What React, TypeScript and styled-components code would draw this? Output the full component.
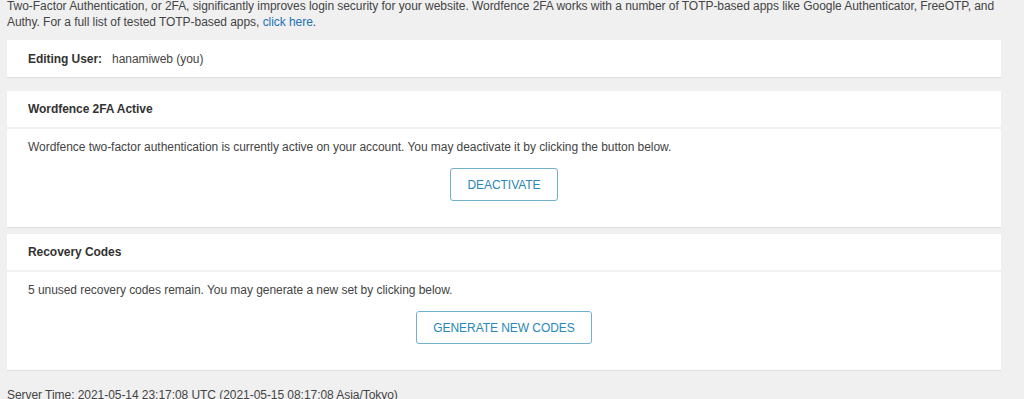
import React from "react";
import styled, { createGlobalStyle } from "styled-components";

const Global = createGlobalStyle`
  html, body { margin: 0; padding: 0; background: #f0f0f1; }
  body { font-family: "Liberation Sans", Arial, sans-serif; font-size: 12px; letter-spacing: -0.05px; color: #444; }
`;

const Page = styled.div`
  padding: 0 23px 0 7px;
  margin-top: -2px;
`;

const Intro = styled.p`
  margin: 0 -23px 10px 0;
  line-height: 16px;
  color: #444;
`;

const Link = styled.a`
  color: #2271b1;
  text-decoration: none;
`;

const Card = styled.section<{ $gap?: number }>`
  background: #fff;
  box-shadow: 0 1px 1px rgba(0, 0, 0, 0.06);
  margin-bottom: ${(p) => p.$gap ?? 8}px;
`;

const UserRow = styled.div`
  display: flex;
  align-items: center;
  height: 37px;
  padding: 0 21px;
  gap: 10px;
`;

const Label = styled.span`
  font-weight: bold;
  color: #333;
`;

const Header = styled.div`
  display: flex;
  align-items: center;
  height: 36px;
  padding: 0 21px;
  font-weight: bold;
  color: #333;
  border-bottom: 2px solid #f1f1f1;
`;

const Body = styled.div<{ $bottom: number }>`
  padding: 10px 21px ${(p) => p.$bottom}px;
  display: flex;
  flex-direction: column;
`;

const BodyText = styled.div`
  line-height: 16px;
`;

const ButtonRow = styled.div`
  display: flex;
  justify-content: center;
  margin-top: 13px;
`;

const OutlineButton = styled.button<{ $w: number }>`
  font-family: "Liberation Sans", Arial, sans-serif;
  font-size: 12px;
  letter-spacing: -0.05px;
  text-transform: uppercase;
  color: #2a87b7;
  background: #fff;
  border: 1px solid #72b0d0;
  border-radius: 3px;
  height: 33px;
  width: ${(p) => p.$w}px;
  padding: 0;
  white-space: nowrap;
  cursor: pointer;
`;

const Footer = styled.p`
  margin: 17px 0 0;
  line-height: 16px;
`;

export default function App() {
  return (
    <>
      <Global />
      <Page>
        <Intro>
          Two-Factor Authentication, or 2FA, significantly improves login security for your website. Wordfence 2FA works with a number of TOTP-based apps like Google Authenticator, FreeOTP, and Authy. For a full list of tested TOTP-based apps, <Link href="#">click here</Link>.
        </Intro>
        <Card $gap={14}>
          <UserRow>
            <Label>Editing User:</Label>
            <span>hanamiweb (you)</span>
          </UserRow>
        </Card>
        <Card $gap={7}>
          <Header>Wordfence 2FA Active</Header>
          <Body $bottom={26}>
            <BodyText>
              Wordfence two-factor authentication is currently active on your account. You may deactivate it by clicking the button below.
            </BodyText>
            <ButtonRow>
              <OutlineButton $w={108}>Deactivate</OutlineButton>
            </ButtonRow>
          </Body>
        </Card>
        <Card $gap={0}>
          <Header>Recovery Codes</Header>
          <Body $bottom={26}>
            <BodyText>5 unused recovery codes remain. You may generate a new set by clicking below.</BodyText>
            <ButtonRow>
              <OutlineButton $w={176}>Generate New Codes</OutlineButton>
            </ButtonRow>
          </Body>
        </Card>
        <Footer>Server Time: 2021-05-14 23:17:08 UTC (2021-05-15 08:17:08 Asia/Tokyo)</Footer>
      </Page>
    </>
  );
}
